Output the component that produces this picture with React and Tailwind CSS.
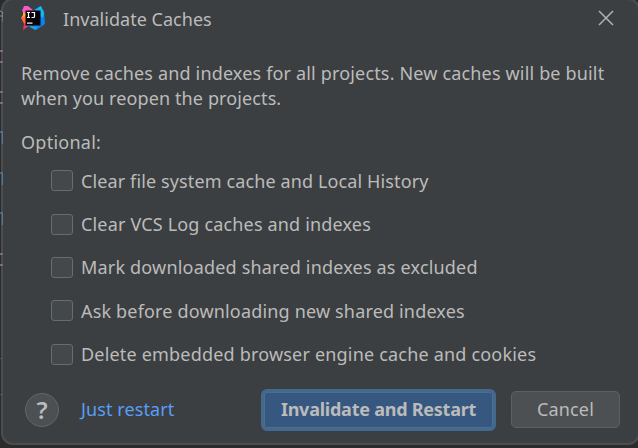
const options = [
  { label: "Clear file system cache and Local History", spacing: "tracking-[0.12px]" },
  { label: "Clear VCS Log caches and indexes", spacing: "tracking-[0.17px]" },
  { label: "Mark downloaded shared indexes as excluded", spacing: "tracking-[0.19px]" },
  { label: "Ask before downloading new shared indexes", spacing: "tracking-[0.17px]" },
  { label: "Delete embedded browser engine cache and cookies", spacing: "tracking-[0.19px]" },
];

function ProductLogo() {
  return (
    <svg className="mb-0.5 h-6 w-6 shrink-0" viewBox="0 0 24 24">
      <path d="M2 4 7 5 9 12 6 15 0 12 2 9Z" fill="#fcb12e" />
      <path d="M3 0 7 0 13 5 5 8 1 5Z" fill="#f65cc0" />
      <path d="M0 11 7 12 9 19 2 24 3 18Z" fill="#fb315f" />
      <path d="M0 12 5 10 5 18 3 17Z" fill="#fa6e42" />
      <path d="M13 4 19 0 23 5 24 18 15 24 8 21 19 17Z" fill="#0b83f0" />
      <path d="M14 4 20 0 23 7 22 12 18 9Z" fill="#12b9ed" />
      <path d="M3 22 8 19 17 21 14 24 8 20Z" fill="#229ce8" />
      <rect x="4.500" y="4.500" width="15" height="15" fill="#080308" />
      <path d="M6 6.500h3M7.500 6.500v5M6 11.500h3M10.500 6.500h3v4q0 1-1 1h-2" fill="none" stroke="#fff" strokeWidth="1.2" />
      <rect x="6" y="16.500" width="5.500" height="1.200" fill="#fff" />
    </svg>
  );
}

export default function App() {
  return (
    <div className="relative h-[448px] w-[638px] overflow-hidden bg-[#2b2b2b] font-['Noto_Sans','Noto_Sans_CJK_SC',sans-serif] text-[18px] text-[#bbbbbb]">
      <div className="relative -mt-0.5 ml-px flex h-[447px] w-[639px] flex-col rounded-[12px] border-2 border-[#4b4d4f] bg-[#3c3f41]">
        <header className="flex h-[38px] items-center pl-[18px]">
          <ProductLogo />
          <h1 className="ml-[18px] whitespace-nowrap tracking-[0.03px]">Invalidate Caches</h1>
          <svg className="mr-[24px] mb-[3px] ml-auto" width="16" height="16" viewBox="0 0 16 16" stroke="#b0b1b2" strokeWidth="1.5">
            <path d="m1 1 14 14M15 1 1 15" />
          </svg>
        </header>
        <p className="mt-[23px] pl-[18px] leading-[25px] whitespace-nowrap">
          <span className="block tracking-[0.165px]">Remove caches and indexes for all projects. New caches will be built</span>
          <span className="block tracking-[0.11px]">when you reopen the projects.</span>
        </p>
        <div className="mt-[19px] pl-[18px] leading-[25px] tracking-[0.25px]">Optional:</div>
        <div className="mt-1 flex flex-col pl-12">
          {options.map(({ label, spacing }) => (
            <label key={label} className="flex h-[43.400px] items-center gap-[8px] whitespace-nowrap">
              <span className="h-[21px] w-[22px] shrink-0 rounded-[3px] border border-[#6b6b6b] bg-[#43494a]" />
              <span className={`${spacing} pt-px`}>{label}</span>
            </label>
          ))}
        </div>
        <footer className="mt-[13px] flex h-[42px] items-center pl-[22px]">
          <button className="h-[34px] w-[34px] rounded-full border border-[#636668] bg-[#4c5052] text-[24px] leading-[32px] font-semibold">?</button>
          <a className="ml-[22px] w-[180px] whitespace-nowrap tracking-[0.1px] text-[#589df6]">Just restart</a>
          <button className="h-[42px] w-[235px] rounded-[6px] border-[3px] border-[#43698e] bg-[#365880] font-bold tracking-[-0.24px] whitespace-nowrap shadow-[inset_0_0_0_1px_#4c708c]">Invalidate and Restart</button>
          <button className="ml-[15px] h-[37px] w-[109px] rounded-[5px] border border-[#5e6060] bg-[#4c5052] tracking-[0.15px]">Cancel</button>
        </footer>
      </div>
      <svg className="absolute top-0 left-0" width="3" height="448" viewBox="0 0 3 448" fill="none">
        <path d="M0 11q3 0 3 4v7M3 16H0" stroke="#8c9197" />
        <path d="M0 51h3M0 62h3M0 92h3M0 103h3M0 254h3M0 265h3" stroke="#80668e" strokeWidth="2" />
        <path d="M0 132h2.500v12M0 173h2.500v12M0 213h2.500v12" stroke="#557694" strokeWidth="1.5" />
        <path d="M0 358.500h3M0 394.500h3" stroke="#555" />
      </svg>
    </div>
  );
}
